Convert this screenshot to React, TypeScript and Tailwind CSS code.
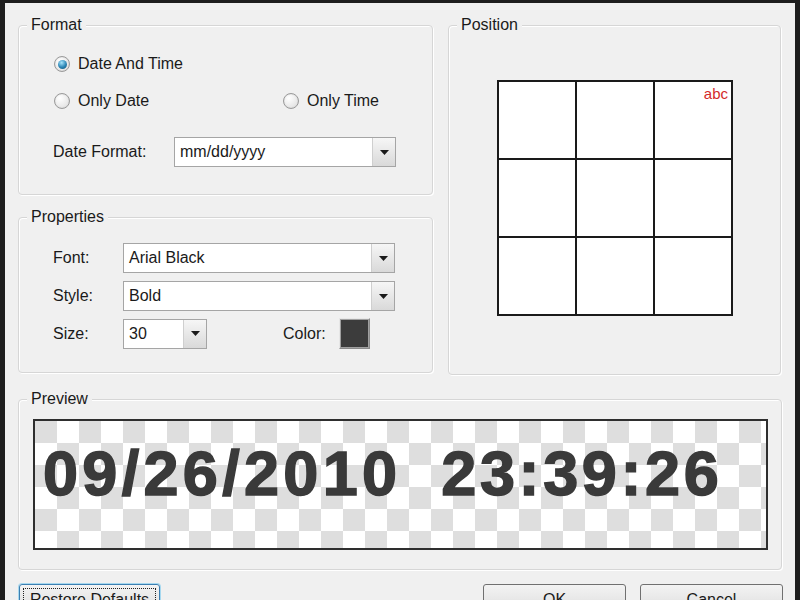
import React from "react";

function Group({ title, className, children }: { title: string; className: string; children?: React.ReactNode }) {
  return (
    <div className={`flex flex-col rounded-[4px] border border-[#d6d6d6] shadow-[inset_1px_1px_0_#ffffff,1px_1px_0_#ffffff] ${className}`}>
      <span className="-mt-[10px] ml-[8px] self-start bg-[#f0f0f0] px-[4px] text-[16px] leading-[18px]">{title}</span>
      {children}
    </div>
  );
}

function Arrow() {
  return (
    <svg width="9" height="5" viewBox="0 0 9 5">
      <path d="M0 0 H9 L4.5 5 Z" fill="#1a1a1a" />
    </svg>
  );
}

function Combo({ value, className }: { value: string; className: string }) {
  return (
    <div className={`flex h-[30px] items-stretch border border-[#a5a5a5] bg-white ${className}`}>
      <div className="flex flex-1 items-center pl-[5px] text-[16px]">{value}</div>
      <div className="flex w-[23px] items-center justify-center border-l border-[#cfcfcf] bg-linear-to-b from-[#f6f6f6] to-[#d9d9d9]">
        <Arrow />
      </div>
    </div>
  );
}

function Radio({ checked, label }: { checked?: boolean; label: string }) {
  return (
    <div className="flex items-center gap-[8px]">
      <div className="flex h-[16px] w-[16px] items-center justify-center rounded-full border border-[#9a9a9a] bg-[radial-gradient(circle_at_35%_30%,#ffffff,#dcdcdc)] shadow-[inset_0_0_1px_#bdbdbd]">
        {checked && (
          <div className="h-[9px] w-[9px] rounded-full bg-[radial-gradient(circle_at_40%_30%,#a6e4fb,#2a84b4_55%,#12506f)]" />
        )}
      </div>
      <span className="text-[16px] leading-[20px]">{label}</span>
    </div>
  );
}

function Button({ label, className, focused }: { label: string; className: string; focused?: boolean }) {
  return (
    <div
      className={`flex h-[30px] items-center justify-center rounded-[3px] border bg-linear-to-b from-[#f3f3f3] via-[#e8e8e8] to-[#d2d2d2] p-[3px] ${
        focused ? "border-[#3c7fb1] shadow-[0_0_0_1px_#a6d8ef]" : "border-[#707070]"
      } ${className}`}
    >
      <div className={`flex h-full w-full items-center justify-center pt-[2px] text-[16px] ${focused ? "border border-dotted border-[#222]" : ""}`}>
        {label}
      </div>
    </div>
  );
}

export default function App() {
  return (
    <div
      className="h-[600px] w-[800px] overflow-hidden border-t-[3px] border-r-[5px] border-l-[5px] border-[#1e1e1e] bg-[#f0f0f0] pt-[22px] pl-[13px] text-[#1a1a1a]"
      style={{ fontFamily: '"Liberation Sans", Arial, sans-serif' }}
    >
      <div className="flex gap-[15px]">
        <div className="flex w-[415px] flex-col">
          <Group title="Format" className="h-[170px]">
            <div className="mt-[20px] flex h-[20px] items-center pl-[35px]">
              <Radio checked label="Date And Time" />
            </div>
            <div className="mt-[17px] flex h-[20px] items-center pl-[35px]">
              <div className="w-[229px]">
                <Radio label="Only Date" />
              </div>
              <Radio label="Only Time" />
            </div>
            <div className="mt-[26px] flex h-[30px] items-center pl-[34px]">
              <span className="w-[121px] text-[16px]">Date Format:</span>
              <Combo value="mm/dd/yyyy" className="w-[222px]" />
            </div>
          </Group>
          <Group title="Properties" className="mt-[22px] h-[156px]">
            <div className="mt-[17px] flex items-center pl-[34px]">
              <span className="w-[70px] text-[16px]">Font:</span>
              <Combo value="Arial Black" className="w-[272px]" />
            </div>
            <div className="mt-[8px] flex items-center pl-[34px]">
              <span className="w-[70px] text-[16px]">Style:</span>
              <Combo value="Bold" className="w-[272px]" />
            </div>
            <div className="mt-[7px] flex items-center pl-[34px]">
              <span className="w-[70px] text-[16px]">Size:</span>
              <Combo value="30" className="w-[84px]" />
              <span className="ml-[76px] w-[56px] text-[16px]">Color:</span>
              <div className="h-[31px] w-[31px] border border-t-[#e6e6e6] border-l-[#e6e6e6] border-r-[#8a8a8a] border-b-[#8a8a8a] bg-[#a0a0a0] p-[1px]">
                <div className="h-full w-full bg-[#3c3c3c]" />
              </div>
            </div>
          </Group>
        </div>
        <Group title="Position" className="h-[350px] w-[333px]">
          <div className="mt-[46px] ml-[48px] grid h-[236px] w-[236px] grid-cols-3 grid-rows-3 gap-[2px] bg-[#1a1a1a] p-[2px]">
            <div className="bg-white" />
            <div className="bg-white" />
            <div className="flex items-start justify-end bg-white pt-[3px] pr-[3px] text-[15px] leading-[18px] text-[#d42a2a]">abc</div>
            <div className="bg-white" />
            <div className="bg-white" />
            <div className="bg-white" />
            <div className="bg-white" />
            <div className="bg-white" />
            <div className="bg-white" />
          </div>
        </Group>
      </div>
      <Group title="Preview" className="mt-[24px] h-[171px] w-[764px]">
        <div className="mt-[11px] ml-[14px] h-[131px] w-[735px] border-2 border-[#2e2e2e] bg-[conic-gradient(#ffffff_25%,#dedede_0_50%,#ffffff_0_75%,#dedede_0)] bg-size-[44px_44px] pt-[21px] pl-[8px]">
          <div className="flex text-[63px] leading-none font-bold text-[#3a3a3a] [-webkit-text-stroke:1.5px_#3a3a3a]">
            <span className="tracking-[4.3px]">09/26/2010</span>
            <span className="ml-[40px] tracking-[3.6px]">23:39:26</span>
          </div>
        </div>
      </Group>
      <div className="mt-[14px] flex pl-[1px]">
        <Button focused label="Restore Defaults" className="w-[141px]" />
        <Button label="OK" className="ml-[323px] w-[143px]" />
        <Button label="Cancel" className="ml-[14px] w-[143px]" />
      </div>
    </div>
  );
}
